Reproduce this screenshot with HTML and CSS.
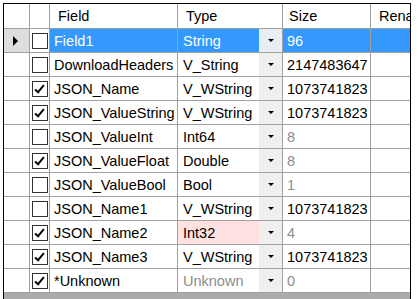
FILE: index.html
```html
<!DOCTYPE html>
<html lang="en">
<head>
    <meta charset="UTF-8">
    <title>Fields</title>
    <link rel="stylesheet" href="styles.css">
</head>
<body>
    <div class="grid">
        <div class="row head">
            <div class="rh"></div>
            <div class="chk"></div>
            <div class="cell field">Field</div>
            <div class="cell type">Type</div>
            <div class="cell size">Size</div>
            <div class="cell ren">Rena</div>
        </div>

        <div class="row sel">
            <div class="rh cur"><span class="tri"></span></div>
            <div class="chk"><span class="box"></span></div>
            <div class="cell field">Field1</div>
            <div class="cell type"><span class="tv">String</span><span class="dd"></span></div>
            <div class="cell size">96</div>
            <div class="cell ren"></div>
        </div>
        <div class="row">
            <div class="rh"></div>
            <div class="chk"><span class="box"></span></div>
            <div class="cell field">DownloadHeaders</div>
            <div class="cell type"><span class="tv">V_String</span><span class="dd"></span></div>
            <div class="cell size">2147483647</div>
            <div class="cell ren"></div>
        </div>
        <div class="row">
            <div class="rh"></div>
            <div class="chk"><span class="box on"></span></div>
            <div class="cell field">JSON_Name</div>
            <div class="cell type"><span class="tv">V_WString</span><span class="dd"></span></div>
            <div class="cell size">1073741823</div>
            <div class="cell ren"></div>
        </div>
        <div class="row">
            <div class="rh"></div>
            <div class="chk"><span class="box on"></span></div>
            <div class="cell field">JSON_ValueString</div>
            <div class="cell type"><span class="tv">V_WString</span><span class="dd"></span></div>
            <div class="cell size">1073741823</div>
            <div class="cell ren"></div>
        </div>
        <div class="row">
            <div class="rh"></div>
            <div class="chk"><span class="box"></span></div>
            <div class="cell field">JSON_ValueInt</div>
            <div class="cell type"><span class="tv">Int64</span><span class="dd"></span></div>
            <div class="cell size dim">8</div>
            <div class="cell ren"></div>
        </div>
        <div class="row">
            <div class="rh"></div>
            <div class="chk"><span class="box on"></span></div>
            <div class="cell field">JSON_ValueFloat</div>
            <div class="cell type"><span class="tv">Double</span><span class="dd"></span></div>
            <div class="cell size dim">8</div>
            <div class="cell ren"></div>
        </div>
        <div class="row">
            <div class="rh"></div>
            <div class="chk"><span class="box"></span></div>
            <div class="cell field">JSON_ValueBool</div>
            <div class="cell type"><span class="tv">Bool</span><span class="dd"></span></div>
            <div class="cell size dim">1</div>
            <div class="cell ren"></div>
        </div>
        <div class="row">
            <div class="rh"></div>
            <div class="chk"><span class="box"></span></div>
            <div class="cell field">JSON_Name1</div>
            <div class="cell type"><span class="tv">V_WString</span><span class="dd"></span></div>
            <div class="cell size">1073741823</div>
            <div class="cell ren"></div>
        </div>
        <div class="row">
            <div class="rh"></div>
            <div class="chk"><span class="box on"></span></div>
            <div class="cell field">JSON_Name2</div>
            <div class="cell type warn"><span class="tv">Int32</span><span class="dd"></span></div>
            <div class="cell size dim">4</div>
            <div class="cell ren"></div>
        </div>
        <div class="row">
            <div class="rh"></div>
            <div class="chk"><span class="box on"></span></div>
            <div class="cell field">JSON_Name3</div>
            <div class="cell type"><span class="tv">V_WString</span><span class="dd"></span></div>
            <div class="cell size">1073741823</div>
            <div class="cell ren"></div>
        </div>
        <div class="row">
            <div class="rh"></div>
            <div class="chk"><span class="box on"></span></div>
            <div class="cell field">*Unknown</div>
            <div class="cell type"><span class="tv dim">Unknown</span><span class="dd"></span></div>
            <div class="cell size dim">0</div>
            <div class="cell ren"></div>
        </div>
        <div class="rest"></div>
    </div>
</body>
</html>
```

FILE: styles.css
```css
body {
    margin: 0;
    background: #fff;
    font-family: "Liberation Sans", Arial, sans-serif;
    font-size: 14.5px;
    color: #000;
}

.grid {
    margin: 3px 0 0 3px;
    width: 406px;
    height: 296px;
    border: 1px solid #000;
    border-bottom: 0;
    background: #ababab;
    overflow: hidden;
}

.row {
    display: grid;
    grid-template-columns: 26px 20px 128px 105px 88px 1fr;
    height: 24px;
    background: #fff;
}

.row.head {
    height: 25px;
}

.row > div {
    border-right: 1px solid #a0a0a0;
    border-bottom: 1px solid #a0a0a0;
    display: flex;
    align-items: center;
    white-space: nowrap;
    overflow: hidden;
}

.row > div:last-child {
    border-right: 0;
}

.head .cell {
    padding-left: 8px;
}

.head .size {
    padding-left: 6px;
}

.cell {
    padding-left: 4px;
}

.type {
    padding-left: 5px;
    padding-right: 0;
    justify-content: space-between;
}

.dim {
    color: #8c8c8c;
}

.warn {
    background: #ffe1e1;
}

.rh.cur {
    background: #dedede;
}

.tri {
    width: 0;
    height: 0;
    margin-left: 9px;
    border-top: 5px solid transparent;
    border-bottom: 5px solid transparent;
    border-left: 5px solid #000;
}

.chk {
    justify-content: center;
}

.box {
    width: 14px;
    height: 14px;
    border: 1px solid #333;
    background: #fff;
    position: relative;
}

.box.on::after {
    content: "";
    position: absolute;
    left: 4px;
    top: 1px;
    width: 3px;
    height: 8px;
    border-right: 2.5px solid #000;
    border-bottom: 2.5px solid #000;
    transform: rotate(40deg);
}

.dd {
    width: 23px;
    height: 23px;
    background: #efefef;
    display: flex;
    align-items: center;
    justify-content: center;
}

.dd::after {
    content: "";
    width: 0;
    height: 0;
    border-left: 3px solid transparent;
    border-right: 3px solid transparent;
    border-top: 3px solid #000;
}

.sel .cell {
    background: #3399ff;
    color: #fff;
}

.sel .dd {
    background: #e9eef4;
}
```
